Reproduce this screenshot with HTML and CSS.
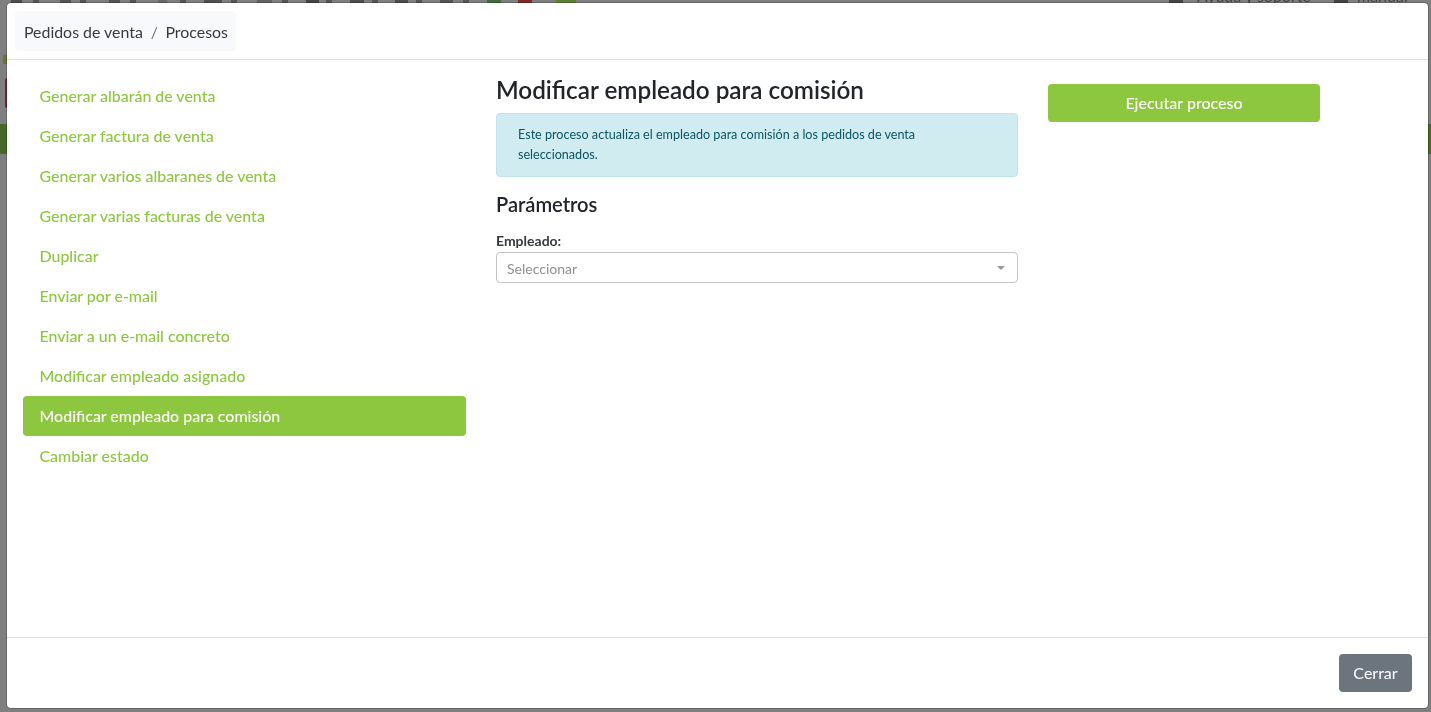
FILE: index.html
```html
<!DOCTYPE html>
<html lang="es">
<head>
<meta charset="utf-8">
<title>Procesos</title>
<link rel="stylesheet" href="styles.css">
</head>
<body>
<div class="backdrop" aria-hidden="true">
  <div class="peek peek-red"></div>
  <div class="peek peek-green-left"></div>
  <div class="peek peek-green-right"></div>
  <div class="peek peek-tiny"></div>
  <div class="peek peek-icons"></div>
  <div class="peek peek-help">Ayuda y soporte</div>
  <div class="peek peek-manual">manual</div>
</div>
<div class="modal">
  <header class="modal-header">
    <nav class="breadcrumb"><span>Pedidos de venta</span><span class="sep">/</span><span>Procesos</span></nav>
  </header>
  <div class="modal-body">
    <ul class="process-list">
      <li class="process">Generar albarán de venta</li>
      <li class="process">Generar factura de venta</li>
      <li class="process">Generar varios albaranes de venta</li>
      <li class="process">Generar varias facturas de venta</li>
      <li class="process">Duplicar</li>
      <li class="process">Enviar por e-mail</li>
      <li class="process">Enviar a un e-mail concreto</li>
      <li class="process">Modificar empleado asignado</li>
      <li class="process active">Modificar empleado para comisión</li>
      <li class="process">Cambiar estado</li>
    </ul>
    <main class="detail">
      <h4 class="detail-title">Modificar empleado para comisión</h4>
      <div class="alert">Este proceso actualiza el empleado para comisión a los pedidos de venta seleccionados.</div>
      <h5 class="params-title">Parámetros</h5>
      <label class="field-label">Empleado:</label>
      <div class="select"><span>Seleccionar</span><i class="caret"></i></div>
    </main>
    <div class="actions"><button class="btn btn-run">Ejecutar proceso</button></div>
  </div>
  <footer class="modal-footer"><button class="btn btn-close">Cerrar</button></footer>
</div>
</body>
</html>
```
FILE: styles.css
```css
* { box-sizing: border-box; }
html, body { height: 100%; }
body {
  margin: 0;
  padding: 2px 2px 3px 6px;
  background: #7f7f7f;
  overflow: hidden;
  font-family: Lato, "Liberation Sans", sans-serif;
  color: #212529;
}
.backdrop { position: fixed; inset: 0; overflow: hidden; }
.peek { position: absolute; }
.peek-red { left: 5px; top: 78px; width: 2px; height: 30px; background: #7c1d33; border-radius: 2px 0 0 2px; }
.peek-green-left { left: 0; top: 124px; width: 7px; height: 30px; background: #46692a; }
.peek-green-right { right: 0; top: 124px; width: 3px; height: 30px; background: #46692a; }
.peek-tiny { left: 3px; top: 55px; width: 4px; height: 9px; background: #66772e; }
.peek-icons {
  left: 0; top: 0; width: 700px; height: 3px;
  background: linear-gradient(90deg,
    transparent 11px, #4d4d4d 11px 22px, transparent 22px 33px, #555 33px 39px,
    transparent 39px 60px, #555 60px 71px, transparent 71px 80px, #555 80px 86px,
    transparent 86px 109px, #555 109px 120px, transparent 120px 130px, #555 130px 136px,
    transparent 136px 158px, #6a6a6a 158px 167px, transparent 167px 180px, #555 180px 186px,
    transparent 186px 204px, #505050 204px 222px, transparent 222px 231px, #555 231px 237px,
    transparent 237px 257px, #626262 257px 272px, transparent 272px 282px, #555 282px 288px,
    transparent 288px 306px, #444 306px 319px, transparent 319px 326px, #555 326px 332px,
    transparent 332px 350px, #4d4d4d 350px 364px, transparent 364px 372px, #555 372px 378px,
    transparent 378px 395px, #4d4d4d 395px 408px, transparent 408px 416px, #555 416px 422px,
    transparent 422px 440px, #555 440px 453px, transparent 453px 463px, #555 463px 469px,
    transparent 469px 487px, #3f6b3f 487px 501px, transparent 501px 518px, #7c2a2a 518px 532px,
    transparent 532px 556px, #5d7f30 556px 576px, transparent 576px);
}
.peek-help, .peek-manual { top: -14px; font-size: 16px; line-height: 19px; color: #444; }
.peek-help { left: 1197px; }
.peek-manual { left: 1357px; }
.peek-help::before, .peek-manual::before {
  content: "";
  position: absolute;
  top: 14px;
  width: 14px;
  height: 3px;
  background: #444;
}
.peek-help::before { left: -28px; }
.peek-manual::before { left: -23px; }
.modal {
  position: relative;
  display: flex;
  flex-direction: column;
  height: 707px;
  background: #fff;
  background-clip: padding-box;
  border: 1px solid rgba(0, 0, 0, .2);
  border-radius: 5px;
}
.modal-header {
  flex: none;
  height: 57px;
  padding: 8px;
  border-bottom: 1px solid #dee2e6;
}
.breadcrumb {
  display: inline-flex;
  align-items: center;
  height: 40px;
  padding: 0 8px 0 9px;
  background: #f8f9fa;
  border-radius: 4px;
  font-size: 15.9px;
  color: #343a40;
}
.sep { margin: 0 7.5px 0 8px; color: #6c757d; }
.modal-body { flex: 1; display: flex; gap: 30px; padding: 16px 16px 0; }
.process-list { flex: none; width: 443px; margin: 0; padding: 0; list-style: none; }
.process {
  height: 40px;
  padding: 0 16.5px;
  border-radius: 4px;
  font-size: 15.95px;
  font-weight: 500;
  line-height: 40px;
  color: #8dc73f;
}
.process.active { background: #8dc73f; color: #fff; }
.detail { flex: none; width: 522px; }
.detail-title { margin: 0; height: 37px; font-size: 24.25px; font-weight: 600; line-height: 27px; }
.alert {
  height: 64px;
  padding: 11px 20px 0 21px;
  background: #d1ecf1;
  border: 1px solid #bee5eb;
  border-radius: 4px;
  font-size: 12.6px;
  line-height: 19.5px;
  color: #0c5460;
}
.params-title { margin: 16px 0 0; height: 37px; font-size: 20.1px; font-weight: 600; line-height: 22px; }
.field-label { display: block; height: 22px; font-size: 14px; font-weight: 700; line-height: 22px; color: #343a40; }
.select {
  position: relative;
  height: 31px;
  padding: 0 10px;
  border: 1px solid #c4c4c4;
  border-radius: 4px;
  font-size: 14px;
  line-height: 32px;
  color: #8f8f8f;
}
.caret {
  position: absolute;
  right: 12px;
  top: 13px;
  border-left: 4px solid transparent;
  border-right: 4px solid transparent;
  border-top: 4px solid #999;
}
.actions { flex: none; width: 272px; padding-top: 8px; }
.btn { display: block; padding: 0 0 2px; border: 0; border-radius: 4px; font-family: inherit; font-size: 16px; color: #fff; }
.btn-run { width: 100%; height: 38px; background: #8dc73f; font-weight: 500; }
.modal-footer {
  flex: none;
  height: 71px;
  display: flex;
  justify-content: flex-end;
  padding: 16px;
  border-top: 1px solid #dee2e6;
}
.btn-close { width: 73px; height: 38px; background: #6c757d; }
```
